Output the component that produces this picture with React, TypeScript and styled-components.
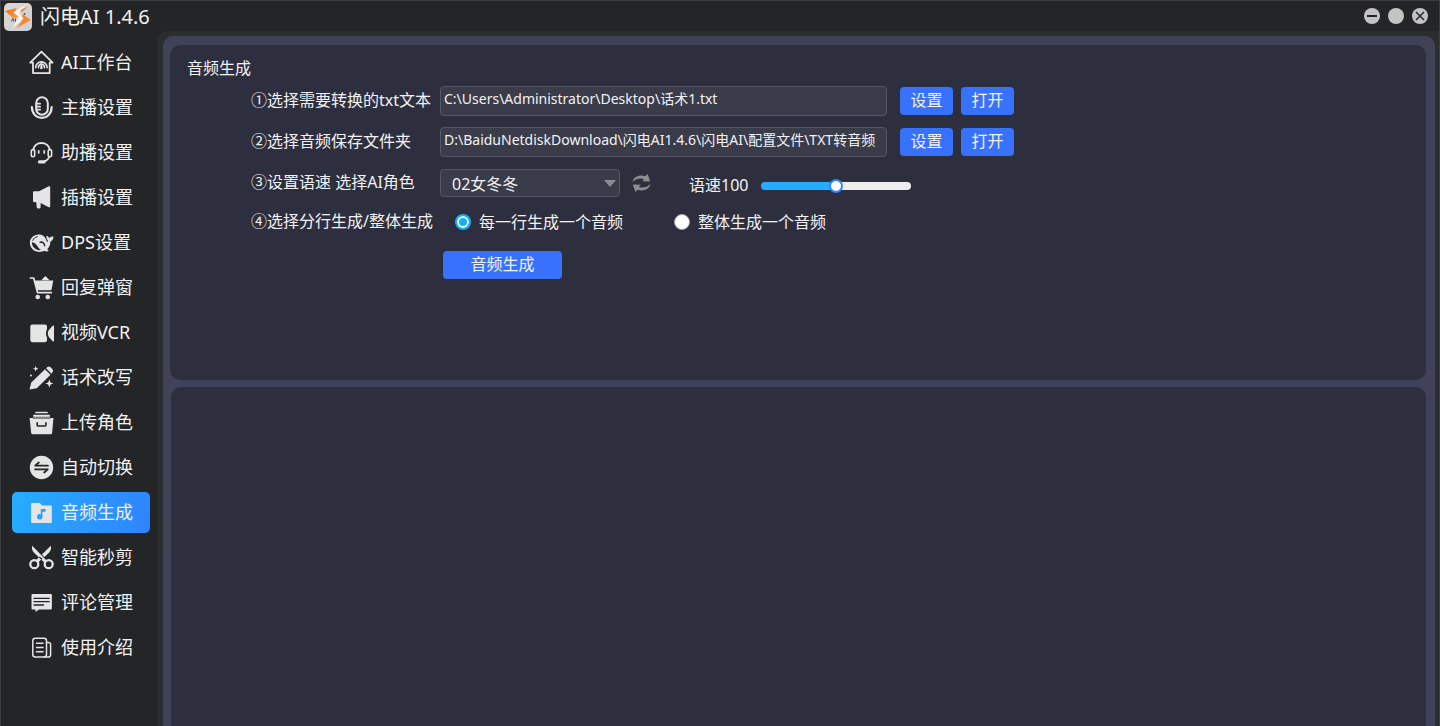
import React, { useState } from "react";
import styled, { createGlobalStyle } from "styled-components";

const GlobalStyle = createGlobalStyle`
  * { box-sizing: border-box; }
  html, body { margin: 0; padding: 0; background: #242527; }
  body, button, input, select {
    font-family: "Noto Sans", "Noto Sans CJK SC", sans-serif;
    color: #f2f2f4;
  }
`;

const Window = styled.div`
  display: flex;
  flex-direction: column;
  height: 100vh;
  overflow: hidden;
  border: 1px solid #3b3d3f;
  border-bottom: 0;
  background: #242527;
`;

const TitleBar = styled.header`
  display: flex;
  align-items: center;
  flex: none;
  height: 30px;
  padding: 2px 11px 0 3px;
`;

const AppName = styled.h1`
  flex: 1;
  margin: 0 0 0 8px;
  font-size: 20px;
  font-weight: 400;
  line-height: 28px;
`;

const WindowButtons = styled.div`
  display: flex;
  gap: 8px;
  padding-bottom: 2px;
`;

const WindowButton = styled.button`
  display: block;
  width: 16px;
  height: 16px;
  padding: 0;
  border: 0;
  border-radius: 50%;
  background: #c3c3c3;
`;

const Body = styled.div`
  display: flex;
  flex: 1;
  min-height: 0;
`;

const Sidebar = styled.nav`
  display: flex;
  flex-direction: column;
  flex: none;
  gap: 4px;
  width: 156px;
  padding: 11px 7px 0 11px;
`;

const NavItem = styled.a<{ $active: boolean }>`
  display: flex;
  align-items: center;
  gap: 7px;
  height: 41px;
  padding: 0 0 0 17px;
  border-radius: 5px;
  background: ${(p) => (p.$active ? "linear-gradient(100deg, #26adff, #2f84ff)" : "transparent")};
  color: #f2f2f4;
  font-size: 18px;
  line-height: 24px;
  white-space: nowrap;
  text-decoration: none;

  svg { flex: none; }
`;

const NavText = styled.span`
  padding-bottom: 2px;
`;

const Frame = styled.div`
  display: flex;
  flex: 1;
  min-width: 0;
  padding: 5px 4px 0 6px;
  border-radius: 10px 0 0 0;
  background: #2b2e2f;
`;

const Main = styled.main`
  display: flex;
  flex-direction: column;
  flex: 1;
  gap: 7px;
  min-width: 0;
  padding: 9px 9px 0 7px;
  border-radius: 10px 10px 0 0;
  background: #404257;
`;

const Panel = styled.section`
  flex: none;
  height: 335px;
  padding: 11px 17px;
  border-radius: 10px;
  background: #2e2f3e;
`;

const ResultPanel = styled.section`
  flex: 1;
  margin-left: 1px;
  border-radius: 10px 10px 0 0;
  background: #2e2f3e;
`;

const PanelTitle = styled.h2`
  margin: 0;
  font-size: 16px;
  font-weight: 400;
  line-height: 24px;
`;

const Form = styled.form`
  display: grid;
  grid-template-columns: 189px minmax(0, 1fr);
  row-gap: 11px;
  padding: 6px 0 0 64px;
`;

const FieldLabel = styled.label`
  align-self: center;
  padding-bottom: 2px;
  font-size: 16px;
  line-height: 24px;
  white-space: nowrap;
`;

const Row = styled.div<{ $gap?: number }>`
  display: flex;
  align-items: center;
  gap: ${(p) => p.$gap ?? 0}px;
  height: 30px;
`;

const ChoiceRow = styled(Row)`
  height: 26px;
  padding-left: 15px;
`;

const PathInput = styled.input`
  width: 447px;
  height: 30px;
  margin-right: 5px;
  padding: 0 3px 7px;
  border: 1px solid #555766;
  border-radius: 4px;
  outline: none;
  background: #3a3c4a;
  font-size: 14px;
`;

const Button = styled.button<{ $wide?: boolean }>`
  width: ${(p) => (p.$wide ? 119 : 53)}px;
  height: 28px;
  padding: 0 0 2px;
  border: 0;
  border-radius: 4px;
  background: #3871fb;
  font-size: 16px;
  line-height: 24px;
`;

const SubmitRow = styled(Row)`
  grid-column: 2;
  height: 34px;
  padding: 4px 0 0 3px;
`;

const SelectBox = styled.div`
  position: relative;
  width: 180px;
  height: 28px;

  svg {
    position: absolute;
    top: 11px;
    right: 4px;
    pointer-events: none;
  }
`;

const Select = styled.select`
  appearance: none;
  width: 100%;
  height: 100%;
  padding: 2px 11px 0;
  border: 1px solid #555766;
  border-radius: 4px;
  outline: none;
  background: #3a3c4a;
  font-size: 16px;
`;

const RefreshButton = styled.button`
  display: flex;
  margin-left: 12px;
  padding: 0;
  border: 0;
  background: none;
`;

const SpeedLabel = styled.label`
  width: 72px;
  margin-left: 38px;
  padding-top: 4px;
  font-size: 16px;
  line-height: 24px;
`;

const Slider = styled.input`
  appearance: none;
  width: 150px;
  height: 14px;
  margin: 6px 0 0;
  background: transparent;

  &::-webkit-slider-runnable-track {
    height: 8px;
    border-radius: 4px;
    background: linear-gradient(to right, #26adff 50%, #eeeeee 50%);
  }
  &::-webkit-slider-thumb {
    appearance: none;
    width: 14px;
    height: 14px;
    margin-top: -3px;
    border: 2px solid #2f84ff;
    border-radius: 50%;
    background: #ffffff;
  }
`;

const Choice = styled.label`
  display: flex;
  align-items: center;
  gap: 8px;
  font-size: 16px;
  line-height: 24px;
  white-space: nowrap;
`;

const Radio = styled.input`
  appearance: none;
  width: 16px;
  height: 16px;
  margin: 0;
  border: 1px solid #a5a5a5;
  border-radius: 50%;
  background: #ffffff;

  &:checked {
    border: 2px solid #12b0fb;
    background: #12b0fb;
    box-shadow: inset 0 0 0 2px #ffffff;
  }
`;

const INK = "#e4e4e4";
const BACK = "#242527";

const Icon = ({ children }: { children: React.ReactNode }) => (
  <svg
    width="25"
    height="25"
    viewBox="0 0 25 25"
    fill="none"
    stroke={INK}
    strokeWidth="1.8"
    strokeLinecap="round"
    strokeLinejoin="round"
    aria-hidden="true"
  >
    {children}
  </svg>
);

const icons = {
  home: (
    <Icon>
      <path d="M4 12.600H1.200L12.400 1.600l11.200 11h-2.900v10.500H4Z" />
      <path d="M6.700 17.600a5.700 5.700 0 0 1 11.400 0M9.400 17.600a3 3.400 0 0 1 1.700-3.100M13.800 14.500a3 3.400 0 0 1 1.700 3.100" strokeWidth="1.700" />
      <path d="M12.400 12v5.500" strokeWidth="2" />
      <circle cx="12.400" cy="18" r="1.200" fill={INK} stroke="none" />
    </Icon>
  ),
  mic: (
    <Icon>
      <rect x="7.200" y="2.300" width="11.600" height="17.400" rx="5.800" strokeWidth="2" />
      <path d="M2.900 12c.2 6.600 4.200 10.800 9.900 10.800s9.700-4.200 9.900-10.800" strokeWidth="2.200" />
      <path d="M7.500 8.700h3.600M7.500 11.700h3.600M7.500 14.700h3.600" strokeWidth="1.700" />
    </Icon>
  ),
  headset: (
    <Icon>
      <path d="M4.200 9.500a8.500 8.200 0 0 1 16.600 0" strokeWidth="1.900" />
      <rect x="2.300" y="9.600" width="3.400" height="7.200" rx="1.700" strokeWidth="1.600" />
      <rect x="19.200" y="9.600" width="3.400" height="7.200" rx="1.700" strokeWidth="1.600" />
      <path d="M20 17.200c-.8 2.200-2.400 3.700-5 4.300" strokeWidth="1.600" />
      <path d="M10.500 21.900h4.500" strokeWidth="3.200" />
      <path d="M9.700 10.800v2.200M15.200 10.800v2.200" strokeWidth="1.700" />
    </Icon>
  ),
  megaphone: (
    <Icon>
      <path d="M4 7.400c0-.7.500-1.100 1.200-1.100H10l9.800-5c.7-.4 1.400 0 1.400.8v19.300c0 .8-.7 1.200-1.400.8L11.600 18v4c0 .9-.5 1.400-1.300 1.400H9c-.8 0-1.200-.5-1.300-1.300L7.300 17.300H5.200c-.7 0-1.200-.5-1.200-1.200Z" fill={INK} stroke="none" />
    </Icon>
  ),
  whale: (
    <Icon>
      <path
        d="M14.300 5.800C9.500 2.300 1.400 5.600.9 12.200.5 17.800 5.300 22 10.600 22c1.900 0 3.300-.5 4.500-1.200 1.700.9 3.500.8 4.600-.1-.6-.5-1.200-1-1.500-1.600 2.300-2.300 3.200-4.700 3.200-7.700 2-.8 3.100-2.500 3-5-1.700-.1-3.300.3-4.200 1.700-.6-1.200-1.400-1.900-2.600-2.300-.5 2 .1 3.600 1.300 4.700-.2.800-.4 1.300-.8 1.700-.7-2.600-2-5-3.800-6.400Z"
        fill={INK}
        stroke="none"
      />
      <path d="M2.900 12.300c2.800.4 4.600 2.300 6 4.700.9 1.400 1.900 2.400 3.100 3-4.800.9-9.300-3-9.100-7.700Z" fill={BACK} stroke="none" />
      <path d="M11.200 12.300c2.100-.8 3.900.7 4.500 3.300" stroke={BACK} strokeWidth="1.500" />
      <path d="M3.800 10.300c.7-1.800 2.400-3.200 4.400-3.700" stroke={BACK} strokeWidth="1" />
    </Icon>
  ),
  cart: (
    <Icon>
      <path d="M1.400 3h3.300l3.800 14.600h13.900" strokeWidth="1.700" />
      <path d="M5.600 5.600H24.300l-1.700 8.600c-.1.700-.6 1-1.300 1H8.200Z" fill={INK} stroke="none" />
      <path d="m12.300 5.200 3-3.300c.7-.8 1.500-.8 2.200 0l3 3.300Z" fill={INK} stroke="none" />
      <circle cx="8.700" cy="22" r="2.300" fill={INK} stroke="none" />
      <circle cx="18.700" cy="22" r="2.300" fill={INK} stroke="none" />
    </Icon>
  ),
  video: (
    <Icon>
      <path d="M3.600 4.600h12.200c1.500 0 2.200.9 2.200 2.200v2.400c-1.400 2.500-1.400 5.700 0 8.200V20c0 1.400-.8 2.200-2.200 2.200H3.600c-1.400 0-2.300-.8-2.300-2.200V6.800c0-1.400.9-2.200 2.300-2.200Z" fill={INK} stroke="none" />
      <path d="M25 5.500v16c-1.700 0-2.500-1.700-3.700-3-1.200-1.100-2.500-2.900-2.500-5.100s1.300-3.800 2.500-4.900c1.200-1.300 2-3 3.700-3Z" fill={INK} stroke="none" />
    </Icon>
  ),
  wand: (
    <Icon>
      <g fill={INK} stroke="none">
        <path d="m16 4.300 5.500 5.500L7.800 23.300.5 24.600 2.300 17.600Z" />
        <path d="m17.100 3.300 1.300-1.300c.9-.8 2-.8 2.900 0L23.500 4.200c.8.8.8 1.900 0 2.800L22.500 8.700Z" />
        <path d="M6.700 1l.8 2 2 .8-2 .8-.8 2-.8-2-2-.8 2-.8Z" />
        <path d="m20.400 14.500 1.200 2.900 2.900 1.100-2.900 1.100-1.200 2.900-1.200-2.900-2.900-1.100 2.900-1.100Z" />
        <circle cx="2" cy="10.500" r="1" />
      </g>
    </Icon>
  ),
  box: (
    <Icon>
      <path d="M7 2.500h11M5 5.500h15.200" strokeWidth="1.700" />
      <path d="M4.700 6.300H20.500l1.200 1.600H24.500l-1.400 15.100c-.1.800-.5 1.200-1.300 1.200H3.500c-.8 0-1.200-.4-1.300-1.200L.6 7.900H3.500Z" fill={INK} stroke="none" />
      <path d="M4 8h17.200" stroke={BACK} strokeWidth="1" />
      <path d="M8.200 12.800v2.100c0 .8.300 1.100 1 1.100h6.700c.7 0 1-.3 1-1.100v-2.100" stroke={BACK} strokeWidth="1.600" />
    </Icon>
  ),
  swap: (
    <Icon>
      <circle cx="12.500" cy="12.500" r="11.700" fill={INK} stroke="none" />
      <path d="M19 10.700H6.200l3.600-3.200M6 14.300h12.800l-3.600 3.200" stroke={BACK} strokeWidth="1.700" />
    </Icon>
  ),
  music: (
    <Icon>
      <path d="M3 3.500h8l2 2.500h9.300v16.500H3Z" fill={INK} stroke={INK} strokeWidth="1" />
      <g stroke="none" fill="#299fff">
        <circle cx="10.700" cy="16.800" r="2.700" />
        <path d="M11.800 9h4.700v2.800h-3.100v5.200h-1.600Z" />
      </g>
    </Icon>
  ),
  scissors: (
    <Icon>
      <circle cx="5.300" cy="19.200" r="4" strokeWidth="2.300" />
      <circle cx="19.700" cy="19.200" r="4" strokeWidth="2.300" />
      <path d="M3.200.7c-.8 3.300.2 5.200 2.100 7.300l10.500 10 2-2.200ZM21.800.7c.8 3.300-.2 5.200-2.100 7.300l-4.200 4-2.600-2.500ZM6.700 15.500l4.100-4 2.200 2.200-4.200 4.300Z" fill={INK} stroke="none" />
      <circle cx="12.500" cy="13.800" r=".8" fill={BACK} stroke="none" />
    </Icon>
  ),
  comment: (
    <Icon>
      <path d="M3.700 4h18c.8 0 1.200.5 1.200 1.200v13c0 .8-.4 1.200-1.200 1.200H10L6.500 22v-2.600H3.700c-.8 0-1.200-.4-1.200-1.200v-13C2.500 4.500 2.900 4 3.700 4Z" fill={INK} stroke="none" />
      <path d="M5 8.400h15.200M5 11.700h15.200M5 15h9.500" stroke={BACK} strokeWidth="1.300" />
    </Icon>
  ),
  guide: (
    <Icon>
      <rect x="3.800" y="3.300" width="13.700" height="18.700" rx="2.500" strokeWidth="1.500" />
      <path d="M17.500 7.500h2c1.500 0 2.100.8 2.100 2.100v9.800c0 1.700-1 2.600-2.500 2.600h-4" strokeWidth="1.500" />
      <path d="M7.500 8.300h6.500M7.500 12.500h6.500M7.500 16.800h6.500" strokeWidth="1.500" />
    </Icon>
  ),
};

const navItems: { label: string; icon: keyof typeof icons }[] = [
  { label: "AI工作台", icon: "home" },
  { label: "主播设置", icon: "mic" },
  { label: "助播设置", icon: "headset" },
  { label: "插播设置", icon: "megaphone" },
  { label: "DPS设置", icon: "whale" },
  { label: "回复弹窗", icon: "cart" },
  { label: "视频VCR", icon: "video" },
  { label: "话术改写", icon: "wand" },
  { label: "上传角色", icon: "box" },
  { label: "自动切换", icon: "swap" },
  { label: "音频生成", icon: "music" },
  { label: "智能秒剪", icon: "scissors" },
  { label: "评论管理", icon: "comment" },
  { label: "使用介绍", icon: "guide" },
];

const Logo = () => (
  <svg width="28" height="28" viewBox="0 0 28 28" aria-hidden="true">
    <defs>
      <linearGradient id="tile" x1="0" y1="0" x2="1" y2="1">
        <stop offset="0" stopColor="#dcd5cc" />
        <stop offset="1" stopColor="#cfd0d8" />
      </linearGradient>
      <linearGradient id="flame" x1="0" y1="0" x2="1" y2="1">
        <stop offset="0" stopColor="#f06a20" />
        <stop offset="1" stopColor="#ffa43a" />
      </linearGradient>
    </defs>
    <rect width="28" height="28" rx="5" fill="url(#tile)" />
    <path d="M1 8 12.500 5l-1.500 4.500 3.500 4.500-5 1.500Z" fill="url(#flame)" />
    <path d="M27 17 12 25.500l5.500-7-3-4 5-2.500Z" fill="url(#flame)" />
    <path d="M22.500 1 9.500 9.500l5.500 4.500L8 25.500 20 15.500l-5-5.500Z" fill="#f4f1f4" />
    <path d="M16.500 7 24 3.500l-6.500 6ZM18.500 11.500l3.500 2.500-3 2Z" fill="#f58a35" />
    <path d="M7.500 18.500l1.300-3 1.300 3M11.500 15.500v3" fill="none" stroke="#4b4d55" strokeWidth="1" />
    <circle cx="20.500" cy="11" r="1" fill="#4b4d55" />
  </svg>
);

const PathField = ({ id, label, value }: { id: string; label: string; value: string }) => {
  const [path, setPath] = useState(value);
  return (
    <>
      <FieldLabel htmlFor={id}>{label}</FieldLabel>
      <Row $gap={8}>
        <PathInput id={id} type="text" spellCheck={false} value={path} onChange={(e) => setPath(e.target.value)} />
        <Button type="button">设置</Button>
        <Button type="button">打开</Button>
      </Row>
    </>
  );
};

export default function App() {
  const [active, setActive] = useState("音频生成");

  return (
    <>
      <GlobalStyle />
      <Window>
        <TitleBar>
          <Logo />
          <AppName>闪电AI 1.4.6</AppName>
          <WindowButtons>
            <WindowButton type="button" aria-label="最小化">
              <svg width="16" height="16" viewBox="0 0 16 16" stroke={BACK} strokeWidth="2">
                <path d="M3 8h10" />
              </svg>
            </WindowButton>
            <WindowButton type="button" aria-label="最大化" />
            <WindowButton type="button" aria-label="关闭">
              <svg width="16" height="16" viewBox="0 0 16 16" stroke={BACK} strokeWidth="1.500">
                <path d="m4 4 8 8M12 4l-8 8" />
              </svg>
            </WindowButton>
          </WindowButtons>
        </TitleBar>
        <Body>
          <Sidebar>
            {navItems.map(({ label, icon }) => (
              <NavItem key={label} href="#" $active={label === active} onClick={() => setActive(label)}>
                {icons[icon]}
                <NavText>{label}</NavText>
              </NavItem>
            ))}
          </Sidebar>
          <Frame>
            <Main>
              <Panel>
                <PanelTitle>音频生成</PanelTitle>
                <Form onSubmit={(e) => e.preventDefault()}>
                  <PathField
                    id="source"
                    label="①选择需要转换的txt文本"
                    value={"C:\\Users\\Administrator\\Desktop\\话术1.txt"}
                  />
                  <PathField
                    id="target"
                    label="②选择音频保存文件夹"
                    value={"D:\\BaiduNetdiskDownload\\闪电AI1.4.6\\闪电AI\\配置文件\\TXT转音频"}
                  />
                  <FieldLabel htmlFor="voice">③设置语速 选择AI角色</FieldLabel>
                  <Row>
                    <SelectBox>
                      <Select id="voice" defaultValue="02女冬冬">
                        <option>02女冬冬</option>
                      </Select>
                      <svg width="12" height="7" viewBox="0 0 12 7" aria-hidden="true">
                        <path d="M0 0h12L6 7Z" fill="#8b8c92" />
                      </svg>
                    </SelectBox>
                    <RefreshButton type="button" aria-label="刷新">
                      <svg width="19" height="18" viewBox="0 0 19 18" fill="#8d8d8f" aria-hidden="true">
                        <path d="M.5 8C1.500 2.500 8 .2 13.300 2.300L15.600 0l2.600 7.500-8-.3 2-2.200C8.500 3.800 4 4.500.5 8Z" />
                        <path d="M18.500 10c-1 5.500-7.500 7.800-12.800 5.700L3.400 18 .8 10.500l8 .3-2 2.200c3.700 1.200 8.200.5 11.700-3Z" />
                      </svg>
                    </RefreshButton>
                    <SpeedLabel htmlFor="speed">语速100</SpeedLabel>
                    <Slider id="speed" type="range" min={0} max={200} defaultValue={100} />
                  </Row>
                  <FieldLabel as="span">④选择分行生成/整体生成</FieldLabel>
                  <ChoiceRow $gap={51}>
                    <Choice>
                      <Radio type="radio" name="mode" defaultChecked />
                      每一行生成一个音频
                    </Choice>
                    <Choice>
                      <Radio type="radio" name="mode" />
                      整体生成一个音频
                    </Choice>
                  </ChoiceRow>
                  <SubmitRow>
                    <Button type="submit" $wide>
                      音频生成
                    </Button>
                  </SubmitRow>
                </Form>
              </Panel>
              <ResultPanel />
            </Main>
          </Frame>
        </Body>
      </Window>
    </>
  );
}
